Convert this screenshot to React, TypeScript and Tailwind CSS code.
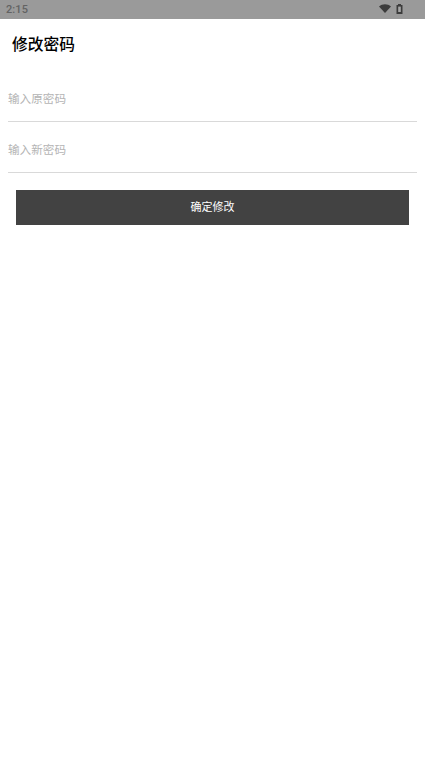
const font = "font-['Roboto','Noto_Sans_CJK_SC',sans-serif]"

function StatusBar() {
  return (
    <div className="flex items-center justify-between h-[19px] bg-[#9a9a9a] pl-[6px] pr-[22px]">
      <span className="text-[11px] leading-none font-medium tracking-[0.1px] text-[#636363]">2:15</span>
      <div className="flex items-center gap-[5px] pb-[2px]">
        <svg width="12" height="9" viewBox="0 0 12 9" aria-hidden="true">
          <path d="M0 2.6 C3.4 -0.6 8.6 -0.6 12 2.6 L6 9 Z" fill="#3c3c3c" />
        </svg>
        <svg width="7" height="10" viewBox="0 0 7 10" aria-hidden="true">
          <path d="M2 0 H5 V1 H6.5 V10 H0.5 V1 H2 Z" fill="#3c3c3c" />
          <rect x="2.2" y="2.6" width="2.6" height="5.4" fill="#a8a8a8" />
        </svg>
      </div>
    </div>
  )
}

function Field({ placeholder }: { placeholder: string }) {
  return (
    <div className="h-[51px] border-b border-[#d9d9d9] flex items-center pt-[8px]">
      <span className="text-[11.6px] text-[#b4b4b4]">{placeholder}</span>
    </div>
  )
}

export default function App() {
  return (
    <div className={`${font} w-[425px] h-[757px] bg-white overflow-hidden`}>
      <StatusBar />
      <h1 className="text-[15.75px] leading-[24px] font-medium text-black pl-[12px] pt-[14px]">修改密码</h1>
      <div className="px-[8px] mt-[14px]">
        <Field placeholder="输入原密码" />
        <Field placeholder="输入新密码" />
      </div>
      <div className="pl-[16px] pr-[16px] mt-[17px]">
        <button className="w-full h-[35px] bg-[#424242] text-white text-[11px] flex items-center justify-center pt-[2px]">
          确定修改
        </button>
      </div>
    </div>
  )
}
